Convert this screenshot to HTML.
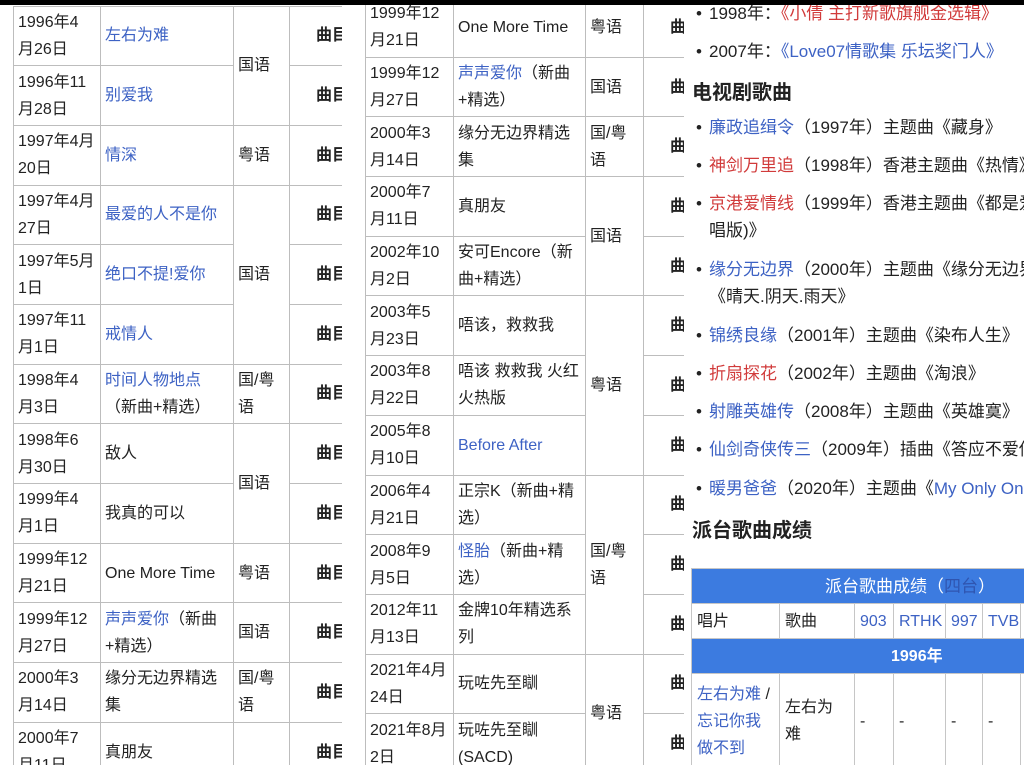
<!DOCTYPE html>
<html><head><meta charset="utf-8"><style>
*{margin:0;padding:0;box-sizing:border-box}
body{width:1024px;height:765px;overflow:hidden;background:#fff;position:relative;font-family:"Liberation Sans","Noto Sans CJK SC",sans-serif;color:#222;font-size:16px}
.clip{position:absolute;top:0;overflow:hidden;height:765px}
table{border-collapse:collapse;table-layout:fixed;position:absolute}
.t td{border:1px solid #bdbdbd;height:59.7px;vertical-align:middle;line-height:27px;white-space:nowrap;padding:0 4px;overflow:hidden}
.t td.m{padding-left:26px;font-weight:bold}
.t tr td:last-child{border-right:none}
a{color:#3d62c4;text-decoration:none}
a.r{color:#d13b3b}
.bar{position:absolute;left:0;top:0;width:1024px;height:5px;background:#000;z-index:9}
.rp{position:absolute;left:689px;top:0;width:335px;height:765px;background:#fff;overflow:hidden}
.li{position:absolute;left:20px;font-size:17px;white-space:nowrap;line-height:26px}
.li:before{content:"•";position:absolute;left:-13px}
.li.nb:before{content:none}
.h{position:absolute;left:3px;font-size:20px;font-weight:bold;white-space:nowrap}
.pt{left:2px;top:568px}
.pt td{border:1px solid #c6c6c6;white-space:nowrap;line-height:27px;padding:0 5px;vertical-align:middle}
.pt .b{background:#3c7be0;color:#fff;text-align:left;height:35px}
</style></head><body>
<div class="bar"></div>

<div class="clip" style="left:0;width:342px">
<table class="t" style="left:13px;top:5.5px;width:360px">
<col style="width:87px"><col style="width:133px"><col style="width:56px"><col style="width:84px">
<tr><td>1996年4<br>月26日</td><td><a>左右为难</a></td><td rowspan="2">国语</td><td class="m">曲目</td></tr>
<tr><td>1996年11<br>月28日</td><td><a>别爱我</a></td><td class="m">曲目</td></tr>
<tr><td>1997年4月<br>20日</td><td><a>情深</a></td><td>粤语</td><td class="m">曲目</td></tr>
<tr><td>1997年4月<br>27日</td><td><a>最爱的人不是你</a></td><td rowspan="3">国语</td><td class="m">曲目</td></tr>
<tr><td>1997年5月<br>1日</td><td><a>绝口不提!爱你</a></td><td class="m">曲目</td></tr>
<tr><td>1997年11<br>月1日</td><td><a>戒情人</a></td><td class="m">曲目</td></tr>
<tr><td>1998年4<br>月3日</td><td><a>时间人物地点</a><br>（新曲+精选）</td><td>国/粤<br>语</td><td class="m">曲目</td></tr>
<tr><td>1998年6<br>月30日</td><td>敌人</td><td rowspan="2">国语</td><td class="m">曲目</td></tr>
<tr><td>1999年4<br>月1日</td><td>我真的可以</td><td class="m">曲目</td></tr>
<tr><td>1999年12<br>月21日</td><td>One More Time</td><td>粤语</td><td class="m">曲目</td></tr>
<tr><td>1999年12<br>月27日</td><td><a>声声爱你</a>（新曲<br>+精选）</td><td>国语</td><td class="m">曲目</td></tr>
<tr><td>2000年3<br>月14日</td><td>缘分无边界精选<br>集</td><td>国/粤<br>语</td><td class="m">曲目</td></tr>
<tr><td>2000年7<br>月11日</td><td>真朋友</td><td></td><td class="m">曲目</td></tr>
</table>
</div>

<div class="clip" style="left:0;width:684px">
<table class="t" style="left:365px;top:-3px;width:360px">
<col style="width:88px"><col style="width:132px"><col style="width:58px"><col style="width:82px">
<tr><td>1999年12<br>月21日</td><td>One More Time</td><td>粤语</td><td class="m">曲目</td></tr>
<tr><td>1999年12<br>月27日</td><td><a>声声爱你</a>（新曲<br>+精选）</td><td>国语</td><td class="m">曲目</td></tr>
<tr><td>2000年3<br>月14日</td><td>缘分无边界精选<br>集</td><td>国/粤<br>语</td><td class="m">曲目</td></tr>
<tr><td>2000年7<br>月11日</td><td>真朋友</td><td rowspan="2">国语</td><td class="m">曲目</td></tr>
<tr><td>2002年10<br>月2日</td><td>安可Encore（新<br>曲+精选）</td><td class="m">曲目</td></tr>
<tr><td>2003年5<br>月23日</td><td>唔该，救救我</td><td rowspan="3">粤语</td><td class="m">曲目</td></tr>
<tr><td>2003年8<br>月22日</td><td>唔该 救救我 火红<br>火热版</td><td class="m">曲目</td></tr>
<tr><td>2005年8<br>月10日</td><td><a>Before After</a></td><td class="m">曲目</td></tr>
<tr><td>2006年4<br>月21日</td><td>正宗K（新曲+精<br>选）</td><td rowspan="3">国/粤<br>语</td><td class="m">曲目</td></tr>
<tr><td>2008年9<br>月5日</td><td><a>怪胎</a>（新曲+精<br>选）</td><td class="m">曲目</td></tr>
<tr><td>2012年11<br>月13日</td><td>金牌10年精选系<br>列</td><td class="m">曲目</td></tr>
<tr><td>2021年4月<br>24日</td><td>玩咗先至瞓</td><td rowspan="2">粤语</td><td class="m">曲目</td></tr>
<tr><td>2021年8月<br>2日</td><td>玩咗先至瞓<br>(SACD)</td><td class="m">曲目</td></tr>
</table>
</div>

<div class="rp">
<div class="li" style="top:1px">1998年：<a class="r">《小倩 主打新歌旗舰金选辑》</a></div>
<div class="li" style="top:39px">2007年：<a>《Love07情歌集 乐坛奖门人》</a></div>
<div class="h" style="top:76px">电视剧歌曲</div>
<div class="li" style="top:115px"><a>廉政追缉令</a>（1997年）主题曲《藏身》</div>
<div class="li" style="top:153px"><a class="r">神剑万里追</a>（1998年）香港主题曲《热情》</div>
<div class="li" style="top:191px"><a class="r">京港爱情线</a>（1999年）香港主题曲《都是爱</div>
<div class="li nb" style="top:218px">唱版)》</div>
<div class="li" style="top:257px"><a>缘分无边界</a>（2000年）主题曲《缘分无边界》</div>
<div class="li nb" style="top:284px">《晴天.阴天.雨天》</div>
<div class="li" style="top:323px"><a>锦绣良缘</a>（2001年）主题曲《染布人生》</div>
<div class="li" style="top:361px"><a class="r">折扇探花</a>（2002年）主题曲《淘浪》</div>
<div class="li" style="top:399px"><a>射雕英雄传</a>（2008年）主题曲《英雄寞》</div>
<div class="li" style="top:437px"><a>仙剑奇侠传三</a>（2009年）插曲《答应不爱你》</div>
<div class="li" style="top:476px"><a>暖男爸爸</a>（2020年）主题曲《<a>My Only One</a>》</div>
<div class="h" style="top:514px">派台歌曲成绩</div>
<table class="pt" style="width:400px">
<col style="width:88px"><col style="width:75px"><col style="width:39px"><col style="width:52px"><col style="width:37px"><col style="width:38px"><col style="width:71px">
<tr><td colspan="7" class="b" style="padding-left:133px;font-size:17px">派台歌曲成绩（<a style="color:#2f55b0">四台</a>）</td></tr>
<tr style="height:35px"><td>唱片</td><td>歌曲</td><td><a>903</a></td><td><a>RTHK</a></td><td><a>997</a></td><td><a>TVB</a></td><td></td></tr>
<tr><td colspan="7" class="b" style="padding-left:199px;font-weight:bold">1996年</td></tr>
<tr style="height:95px"><td><a>左右为难</a> /<br><a>忘记你我</a><br><a>做不到</a></td><td>左右为<br>难</td><td>-</td><td>-</td><td>-</td><td>-</td><td></td></tr>
</table>
</div>
</body></html>
